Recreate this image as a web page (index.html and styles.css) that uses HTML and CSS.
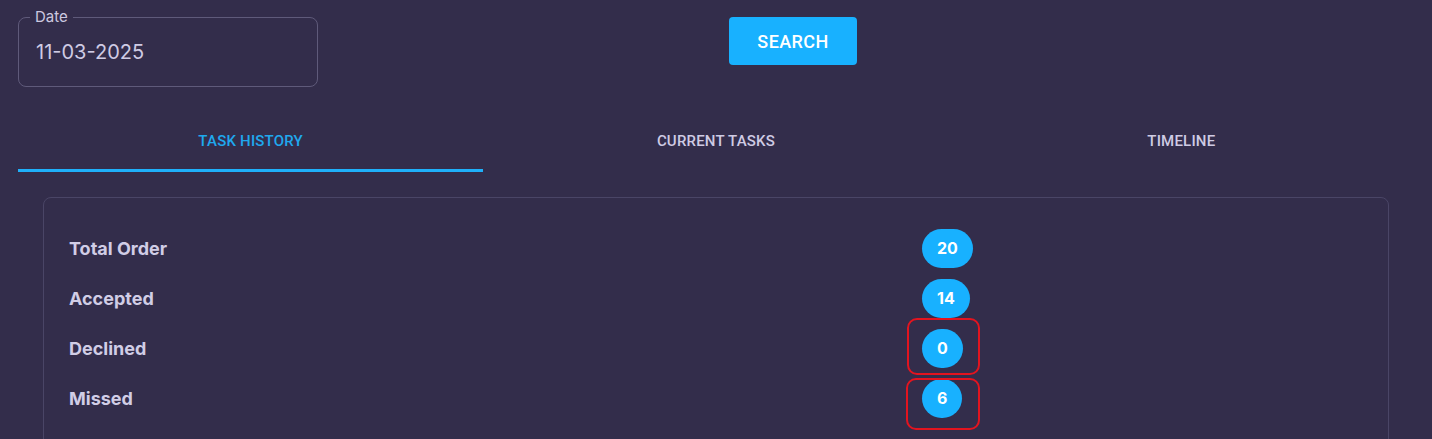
FILE: index.html
```html
<!DOCTYPE html>
<html>
<head>
<meta charset="utf-8">
<link rel="stylesheet" href="styles.css">
</head>
<body>
<div class="page">
  <div class="toolbar">
    <fieldset class="date-field">
      <legend class="date-label">Date</legend>
      <div class="date-value">11-03-2025</div>
    </fieldset>
    <button class="search-btn">SEARCH</button>
  </div>
  <div class="tabs">
    <div class="tab active">TASK HISTORY</div>
    <div class="tab">CURRENT TASKS</div>
    <div class="tab">TIMELINE</div>
  </div>
  <div class="card">
    <div class="row"><span class="label">Total Order</span><span class="cell"><span class="badge">20</span></span></div>
    <div class="row"><span class="label">Accepted</span><span class="cell"><span class="badge">14</span></span></div>
    <div class="row"><span class="label">Declined</span><span class="cell"><span class="badge">0</span><span class="mark mark-a"></span></span></div>
    <div class="row"><span class="label">Missed</span><span class="cell"><span class="badge">6</span><span class="mark mark-b"></span></span></div>
  </div>
</div>
</body>
</html>
```
FILE: styles.css
```css
* { box-sizing: border-box; }
html, body { margin: 0; padding: 0; }
body {
  background: #332d4b;
  font-family: Inter, "Noto Sans", sans-serif;
  color: #d1cde6;
  width: 1432px;
  height: 439px;
  overflow: hidden;
}
.page { padding: 7px 18px 0 18px; }
.toolbar { display: flex; align-items: flex-start; }
.date-field {
  width: 300px;
  height: 80px;
  margin: 0;
  padding: 0 0 0 17px;
  border: 1px solid #5f5a7a;
  border-radius: 8px;
  position: relative;
}
.date-label {
  font-size: 15px;
  color: #cdc9e0;
  padding: 0 5px;
  margin-left: -6px;
  line-height: 20px;
}
.date-value {
  font-size: 20px;
  color: #cfcbe4;
  margin-top: 12px;
  line-height: 26px;
}
.search-btn {
  margin-left: 411px;
  margin-top: 10px;
  width: 128px;
  height: 48px;
  border: none;
  border-radius: 4px;
  background: #18b1ff;
  color: #ffffff;
  font-family: Roboto, "Liberation Sans", sans-serif;
  font-weight: 500;
  font-size: 18px;
  letter-spacing: 0.4px;
  padding: 0;
}
.tabs {
  display: grid;
  grid-template-columns: repeat(3, 1fr);
  margin-top: 23px;
  width: 1396px;
}
.tab {
  height: 62px;
  padding-top: 22px;
  text-align: center;
  font-family: Roboto, "Liberation Sans", sans-serif;
  font-weight: 500;
  font-size: 15px;
  letter-spacing: 0.2px;
  line-height: 18px;
  color: #cfcbe4;
  border-bottom: 3px solid transparent;
}
.tab.active { color: #1fa8ee; border-bottom-color: #1fb0fa; }
.card {
  margin: 25px 25px 0 25px;
  border: 1px solid #4a4566;
  border-radius: 8px;
  padding: 30px 25px 30px 25px;
  display: flex;
  flex-direction: column;
  gap: 10px;
}
.row { display: flex; align-items: center; height: 40px; }
.label {
  width: 853px;
  font-size: 18px;
  font-weight: 700;
  color: #d1cde6;
}
.cell { position: relative; display: flex; }
.badge {
  height: 39px;
  min-width: 39px;
  padding: 0 15px;
  border-radius: 20px;
  background: #18b1ff;
  color: #ffffff;
  font-weight: 700;
  font-size: 16px;
  display: flex;
  align-items: center;
  justify-content: center;
}
.mark {
  position: absolute;
  border: 2px solid #e3141f;
  border-radius: 10px;
}
.mark-a { left: -15px; top: -11px; width: 73px; height: 57px; }
.mark-b { left: -16px; top: -1px; width: 74px; height: 52px; }
```
